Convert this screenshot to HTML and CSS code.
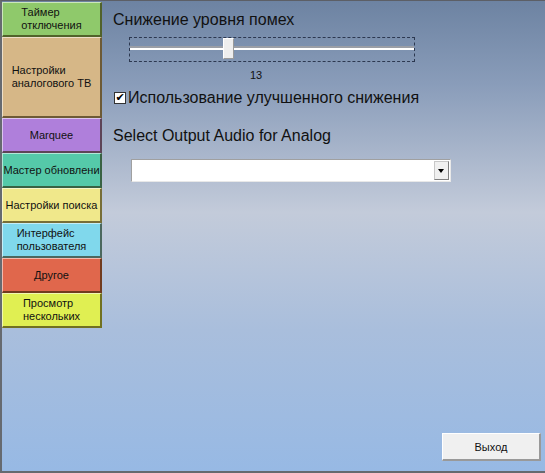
FILE: index.html
```html
<!DOCTYPE html>
<html>
<head>
<meta charset="utf-8">
<link rel="stylesheet" href="styles.css">
</head>
<body>
<div class="window">
  <nav class="sidebar">
    <div class="tab green"><span>Таймер<br>отключения</span></div>
    <div class="tab tan tall"><span>Настройки<br>аналогового ТВ</span></div>
    <div class="tab purple"><span>Marquee</span></div>
    <div class="tab teal"><span>Мастер обновлени</span></div>
    <div class="tab yellow"><span>Настройки поиска</span></div>
    <div class="tab blue"><span>Интерфейс<br>пользователя</span></div>
    <div class="tab red"><span>Другое</span></div>
    <div class="tab lime"><span>Просмотр<br>нескольких</span></div>
  </nav>
  <main class="content">
    <div class="heading">Снижение уровня помех</div>
    <div class="slider">
      <div class="track"></div>
      <div class="thumb"></div>
    </div>
    <div class="value">13</div>
    <label class="check"><span class="box">✔</span>Использование улучшенного снижения</label>
    <div class="heading second">Select Output Audio for Analog</div>
    <div class="combo"><div class="arrow"></div></div>
  </main>
  <button class="exit">Выход</button>
</div>
</body>
</html>
```
FILE: styles.css
```css
html, body {
  margin: 0;
  padding: 0;
}
body {
  width: 545px;
  height: 473px;
  overflow: hidden;
  font-family: Tahoma, "DejaVu Sans", "Liberation Sans", sans-serif;
}
.window {
  position: relative;
  box-sizing: border-box;
  width: 545px;
  height: 473px;
  border-top: 1px solid #5c5f66;
  border-left: 2px solid #666a70;
  border-bottom: 2px solid #666a70;
  background: linear-gradient(to bottom, #6d83a2 0%, #8a9dba 18%, #c3cbda 45%, #a9bedc 70%, #97b9e4 100%);
  display: flex;
}
.sidebar {
  display: flex;
  flex-direction: column;
  width: 100px;
  padding-top: 1px;
}
.tab {
  box-sizing: border-box;
  height: 35px;
  display: flex;
  align-items: center;
  justify-content: center;
  font-family: "Liberation Sans", sans-serif;
  font-size: 11px;
  line-height: 13px;
  color: #111;
  border-top: 1px solid rgba(255,255,255,0.55);
  border-left: 1px solid rgba(255,255,255,0.55);
  border-right: 2px solid rgba(40,30,0,0.6);
  border-bottom: 2px solid rgba(40,30,0,0.6);
  white-space: nowrap;
  overflow: hidden;
}
.tab span {
  text-align: left;
}
.tall { height: 81px; }
.green { background: #8fc96b; }
.tan { background: #d6b787; }
.purple { background: #af7fdb; }
.teal { background: #55c9a9; }
.yellow { background: #f0e88b; }
.blue { background: #80d8ec; }
.red { background: #e0674c; }
.lime { background: #e0ef52; }
.content {
  padding-left: 11px;
  padding-top: 9px;
  flex: 1;
}
.heading {
  font-family: "Liberation Sans", sans-serif;
  font-size: 16px;
  line-height: 19px;
  color: #111;
}
.second {
  margin-top: 19px;
}
.slider {
  position: relative;
  box-sizing: border-box;
  width: 286px;
  height: 25px;
  margin-left: 16px;
  margin-top: 8px;
  border: 1px dashed #2c3850;
}
.track {
  position: absolute;
  left: 0;
  right: 0;
  top: 8px;
  height: 2px;
  background: #9a9ea6;
  border-bottom: 2px solid #ffffff;
}
.thumb {
  position: absolute;
  left: 93px;
  top: 0;
  width: 9px;
  height: 19px;
  background: #eeeeee;
  border-top: 1px solid #fff;
  border-left: 1px solid #fff;
  border-right: 1px solid #9a9a9a;
  border-bottom: 1px solid #9a9a9a;
}
.value {
  font-family: "Liberation Sans", sans-serif;
  font-size: 11px;
  line-height: 13px;
  color: #111;
  margin-left: 137px;
  margin-top: 7px;
}
.check {
  display: flex;
  align-items: center;
  margin-top: 6px;
  margin-left: 1px;
  font-family: "Liberation Sans", sans-serif;
  font-size: 16px;
  line-height: 19px;
  color: #111;
  white-space: nowrap;
}
.box {
  box-sizing: border-box;
  width: 12px;
  height: 12px;
  margin-right: 2px;
  background: #fff;
  border: 1px solid #333;
  font-size: 11px;
  line-height: 10px;
  text-align: center;
  color: #000;
  font-family: "DejaVu Sans", sans-serif;
  overflow: hidden;
}
.combo {
  position: relative;
  box-sizing: border-box;
  width: 320px;
  height: 23px;
  margin-left: 18px;
  margin-top: 14px;
  background: #fff;
  border-top: 1px solid #a0a0a0;
  border-left: 1px solid #a0a0a0;
  border-right: 1px solid #e8e8e8;
  border-bottom: 1px solid #e8e8e8;
}
.arrow {
  position: absolute;
  right: 1px;
  top: 1px;
  width: 15px;
  height: 19px;
  box-sizing: border-box;
  background: #f0f0f0;
  border: 1px solid #c8c8c8;
  border-right-color: #808080;
  border-bottom-color: #808080;
}
.arrow::after {
  content: "";
  position: absolute;
  left: 3px;
  top: 7px;
  border-left: 3px solid transparent;
  border-right: 3px solid transparent;
  border-top: 4px solid #000;
}
.exit {
  position: absolute;
  left: 440px;
  top: 432px;
  width: 99px;
  height: 28px;
  box-sizing: border-box;
  background: #f0f0f0;
  border-top: 1px solid #ffffff;
  border-left: 1px solid #ffffff;
  border-right: 2px solid #999;
  border-bottom: 2px solid #999;
  font-family: "Liberation Sans", sans-serif;
  font-size: 11px;
  color: #111;
  padding: 0;
}
```
